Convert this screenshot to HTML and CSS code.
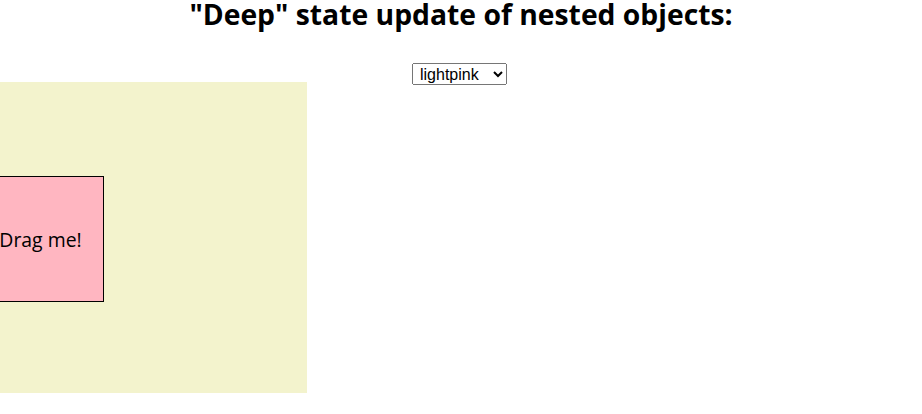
FILE: index.html
```html
<!DOCTYPE html>
<html>
<head>
<meta charset="utf-8">
<link rel="stylesheet" href="styles.css">
</head>
<body>
<h1 class="title">"Deep" state update of nested objects:</h1>
<div class="controls">
  <select class="color-select">
    <option>lightpink</option>
    <option>aliceblue</option>
    <option>lightblue</option>
  </select>
</div>
<div class="canvas">
  <div class="box">Drag me!</div>
</div>
</body>
</html>
```
FILE: styles.css
```css
html, body {
  margin: 0;
  padding: 0;
  background: #fff;
}
body {
  font-family: "Open Sans", "Noto Sans", sans-serif;
  color: #000;
}
.title {
  margin: 0;
  height: 43px;
  line-height: 28px;
  font-size: 28.3px;
  font-weight: 700;
  text-align: center;
}
.controls {
  display: flex;
  justify-content: center;
  padding-top: 20px;
  padding-right: 3px;
  height: 19px;
}
.color-select {
  font-family: "Liberation Sans", Arial, sans-serif;
  font-size: 16px;
  height: 22px;
  width: 95px;
  margin: 0;
  padding: 0 0 0 3px;
}
.canvas {
  position: relative;
  width: 307px;
  height: 311px;
  background: #f3f3cd;
  overflow: hidden;
}
.box {
  position: absolute;
  left: -23px;
  top: 94px;
  width: 125px;
  height: 124px;
  border: 1px solid #000;
  background: #ffb6c1;
  display: flex;
  align-items: center;
  justify-content: center;
  font-size: 19.4px;
}
```
